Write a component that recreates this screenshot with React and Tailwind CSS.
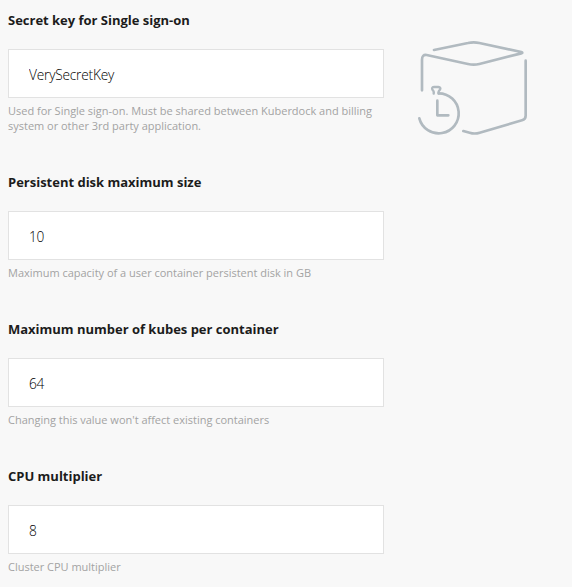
const settings = [
  {
    id: 'sso-key',
    label: 'Secret key for Single sign-on',
    value: 'VerySecretKey',
    hint: 'Used for Single sign-on. Must be shared between Kuberdock and billing system or other 3rd party application.',
  },
  {
    id: 'disk-size',
    label: 'Persistent disk maximum size',
    value: '10',
    hint: 'Maximum capacity of a user container persistent disk in GB',
  },
  {
    id: 'max-kubes',
    label: 'Maximum number of kubes per container',
    value: '64',
    hint: "Changing this value won't affect existing containers",
  },
  {
    id: 'cpu-multiplier',
    label: 'CPU multiplier',
    value: '8',
    hint: 'Cluster CPU multiplier',
  },
];

function Field({ id, label, value, hint }) {
  return (
    <div className="flex flex-col">
      <label htmlFor={id} className="text-[13px] leading-5 font-bold tracking-[-0.01px] text-[#1c1c1c]">
        {label}
      </label>
      <input
        id={id}
        defaultValue={value}
        className="mt-[19px] h-[49px] w-full border border-[#e2e2e2] bg-white px-5 pt-0.5 text-[13.7px] font-light tracking-[-0.2px] text-black outline-none"
      />
      <p className="mt-[5px] text-[11px] leading-[15px] tracking-[-0.01px] text-[#a3a3a3]">{hint}</p>
    </div>
  );
}

function ContainerTimerIcon() {
  return (
    <svg
      viewBox="0 0 375 345"
      className="h-[115px] w-[125px]"
      fill="none"
      stroke="#b1bac0"
      strokeWidth="8"
      strokeLinecap="round"
      strokeLinejoin="round"
    >
      <path d="M72 60 L174 39 Q191 35 208 39 L334 66 Q340 68 334 70 L208 102 Q191 106 174 102 L50 75 Q36 73 36 89 V181" />
      <path d="M347 92 V257 Q347 268 336 271 L209 308 Q194 313 179 308 L160 303" />
      <path d="M86 190 A60 60 0 1 1 28 265" />
      <path d="M82 212 V256 H115" />
      <path strokeWidth="7" d="M71 191 Q73 184 67 179 Q64 171 73 171 H85 Q94 172 90 179 Q84 184 86 191" />
    </svg>
  );
}

export default function App() {
  return (
    <main className="flex h-[587px] w-[572px] items-start gap-[26px] overflow-hidden bg-[#f8f8f8] pl-2 font-['Open_Sans',sans-serif]">
      <form className="flex w-[376px] shrink-0 flex-col gap-[39px] pt-2.5">
        {settings.map((setting) => (
          <Field key={setting.id} {...setting} />
        ))}
      </form>
      <aside className="shrink-0 pt-[30px]">
        <ContainerTimerIcon />
      </aside>
    </main>
  );
}
